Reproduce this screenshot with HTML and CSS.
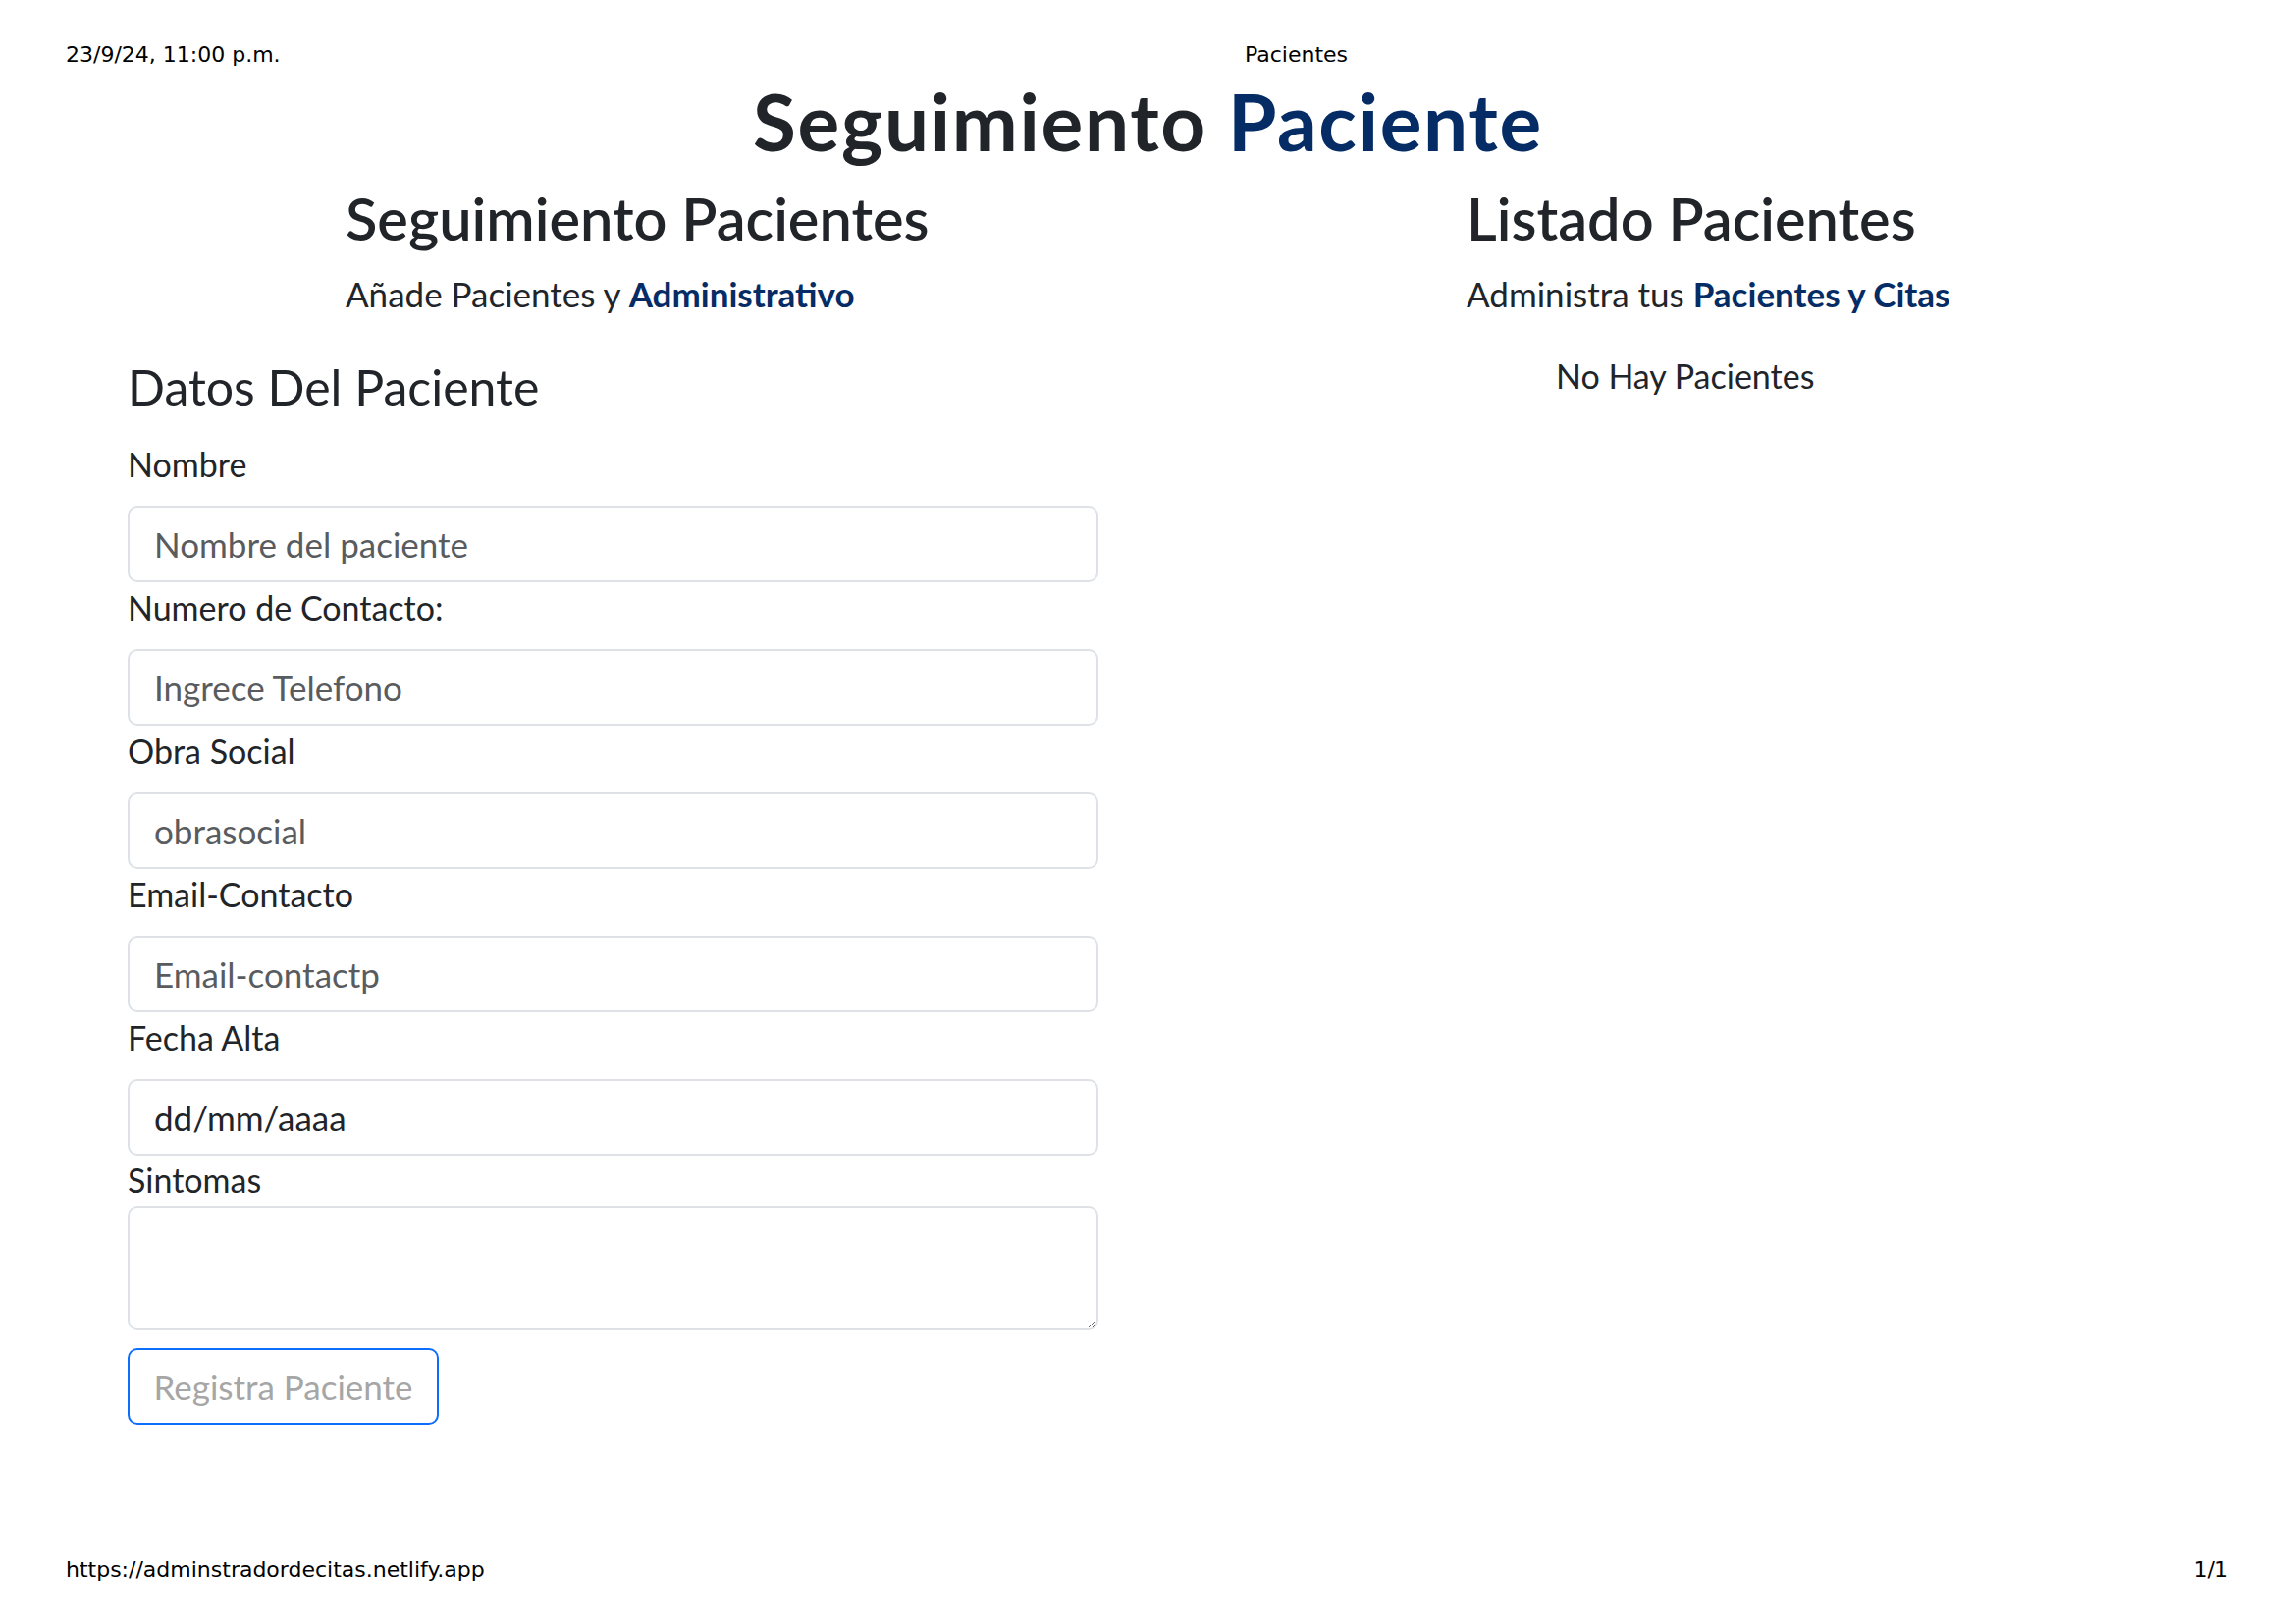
FILE: index.html
```html
<!DOCTYPE html>
<html lang="es">
<head>
<meta charset="utf-8">
<title>Pacientes</title>
<link rel="stylesheet" href="styles.css">
</head>
<body>
<div class="page">
  <header class="print-head">
    <span class="print-date">23/9/24, 11:00 p.m.</span>
    <span class="print-title">Pacientes</span>
  </header>

  <main class="app">
    <h1 class="title">Seguimiento <span class="accent">Paciente</span></h1>

    <div class="columns">
      <section class="col-form">
        <div class="intro">
          <h2 class="section-title">Seguimiento Pacientes</h2>
          <p class="lead">Añade Pacientes y <span class="accent-strong">Administrativo</span></p>
        </div>

        <form class="form">
          <h3 class="form-title">Datos Del Paciente</h3>

          <label class="field-label first" for="nombre">Nombre</label>
          <input class="field" id="nombre" type="text" placeholder="Nombre del paciente">

          <label class="field-label" for="telefono">Numero de Contacto:</label>
          <input class="field" id="telefono" type="text" placeholder="Ingrece Telefono">

          <label class="field-label" for="obra">Obra Social</label>
          <input class="field" id="obra" type="text" placeholder="obrasocial">

          <label class="field-label" for="email">Email-Contacto</label>
          <input class="field" id="email" type="text" placeholder="Email-contactp">

          <label class="field-label" for="fecha">Fecha Alta</label>
          <input class="field" id="fecha" type="text" value="dd/mm/aaaa">

          <label class="field-label tight" for="sintomas">Sintomas</label>
          <textarea class="field area" id="sintomas"></textarea>

          <button class="submit" type="button">Registra Paciente</button>
        </form>
      </section>

      <section class="col-list">
        <h2 class="section-title">Listado Pacientes</h2>
        <p class="lead">Administra tus <span class="accent-strong">Pacientes y Citas</span></p>
        <p class="empty">No Hay Pacientes</p>
      </section>
    </div>
  </main>

  <footer class="print-foot">
    <span>https://adminstradordecitas.netlify.app</span>
    <span>1/1</span>
  </footer>
</div>
</body>
</html>
```

FILE: styles.css
```css
* { box-sizing: border-box; }

html, body {
  margin: 0;
  padding: 0;
  background: #ffffff;
}

body {
  font-family: "Lato", "Open Sans", sans-serif;
  color: #212529;
}

.page {
  width: 2339px;
  height: 1653px;
  display: flex;
  flex-direction: column;
}

/* print header / footer */
.print-head,
.print-foot {
  font-family: "DejaVu Sans", sans-serif;
  font-size: 22px;
  line-height: 26px;
  color: #000;
}

.print-head {
  display: grid;
  grid-template-columns: 1201px auto;
  padding: 43px 0 0 67px;
}

.print-foot {
  display: flex;
  justify-content: space-between;
  padding: 0 69px 41px 67px;
}

.app {
  flex: 1;
}

/* main title */
.title {
  margin: 9px 0 0;
  text-align: center;
  font-size: 80px;
  line-height: 90px;
  letter-spacing: 1.7px;
  font-weight: 700;
  color: #212529;
}

.accent {
  color: #052c65;
}

.columns {
  display: grid;
  grid-template-columns: 989px 1fr;
  column-gap: 375px;
  padding-left: 130px;
  margin-top: 20px;
}

.intro {
  padding-left: 222px;
}

.section-title {
  margin: 0;
  font-size: 59.5px;
  line-height: 68px;
  font-weight: 600;
}

.lead {
  margin: 22px 0 0;
  font-size: 35px;
  line-height: 42px;
  font-weight: 400;
}

.accent-strong {
  color: #052c65;
  font-weight: 700;
}

/* form */
.form {
  display: flex;
  flex-direction: column;
}

.form-title {
  margin: 46px 0 0;
  font-size: 50px;
  line-height: 56px;
  font-weight: 400;
}

.field-label {
  display: block;
  margin: 7px 0 23px;
  font-size: 34px;
  line-height: 38px;
}

.field-label.first {
  margin-top: 32px;
}

.field-label.tight {
  margin: 6px 0 7px;
}

.field {
  display: block;
  width: 100%;
  height: 78px;
  margin: 0;
  padding: 0 25px;
  border: 2px solid #dee2e6;
  border-radius: 10px;
  background: #fff;
  font-family: "Lato", "Open Sans", sans-serif;
  font-size: 35px;
  color: #212529;
  outline: none;
}

.field::placeholder {
  color: #595c5f;
  opacity: 1;
}

.area {
  height: 127px;
  padding: 12px 25px;
  resize: vertical;
}

.submit {
  align-self: flex-start;
  width: 317px;
  height: 78px;
  margin-top: 18px;
  padding: 0;
  border: 2px solid #0d6efd;
  border-radius: 10px;
  background: #fff;
  font-family: "Lato", "Open Sans", sans-serif;
  font-size: 35px;
  color: #a6a6a6;
  text-align: center;
}

/* list column */
.empty {
  margin: 44px 0 0;
  padding-left: 91px;
  font-size: 34px;
  line-height: 38px;
}
```
